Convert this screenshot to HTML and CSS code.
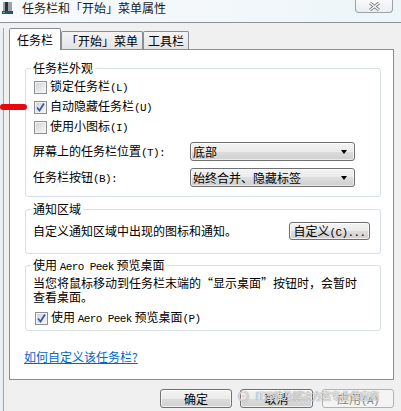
FILE: index.html
```html
<!DOCTYPE html>
<html lang="zh-CN">
<head>
<meta charset="utf-8">
<title>任务栏和「开始」菜单属性</title>
<link rel="stylesheet" href="styles.css">
</head>
<body>
<div class="window">
  <div class="titlebar">
    <div class="title">
      <svg class="appicon" width="11" height="14" viewBox="0 0 11 14">
        <rect x="1" y="1" width="9" height="9" fill="#9aa3aa"/>
        <rect x="3" y="1" width="3" height="9" fill="#30343a"/>
        <rect x="0" y="10" width="11" height="3" fill="#2b4f7a"/>
        <rect x="1" y="11" width="2" height="1" fill="#5fc35a"/>
      </svg>
      <span>任务栏和「开始」菜单属性</span>
    </div>
    <div class="close">
      <svg width="13" height="9" viewBox="0 0 13 9">
        <path d="M2 1 L11 8 M11 1 L2 8" stroke="#7a7f85" stroke-width="3" fill="none"/>
        <path d="M2 1 L11 8 M11 1 L2 8" stroke="#fbfbfb" stroke-width="1.2" fill="none"/>
      </svg>
    </div>
  </div>
  <div class="client">
    <div class="tabs">
      <div class="tab active">任务栏</div>
      <div class="tab t2">「开始」菜单</div>
      <div class="tab t3">工具栏</div>
    </div>
    <div class="panel">
      <div class="group g1">
        <div class="gtitle">任务栏外观</div>
        <div class="cb-row"><span class="cb"></span><span>锁定任务栏<span class="m">(L)</span></span></div>
        <div class="cb-row"><span class="cb checked"><svg width="11" height="11" viewBox="0 0 11 11"><path d="M2 5.5 L4.5 8.5 L9 1.5" stroke="#3c5aa0" stroke-width="1.8" fill="none"/></svg></span><span>自动隐藏任务栏<span class="m">(U)</span></span></div>
        <div class="cb-row"><span class="cb"></span><span>使用小图标<span class="m">(I)</span></span></div>
        <div class="combo-row">
          <span class="clabel">屏幕上的任务栏位置<span class="m">(T):</span></span>
          <div class="combo"><span>底部</span><span class="arrow"></span></div>
        </div>
        <div class="combo-row second">
          <span class="clabel">任务栏按钮<span class="m">(B):</span></span>
          <div class="combo"><span>始终合并、隐藏标签</span><span class="arrow"></span></div>
        </div>
      </div>
      <div class="group g2">
        <div class="gtitle">通知区域</div>
        <span>自定义通知区域中出现的图标和通知。</span>
        <div class="btn custom">自定义<span class="m">(C)...</span></div>
      </div>
      <div class="group g3">
        <div class="gtitle">使用 <span class="m">Aero Peek</span> 预览桌面</div>
        <p class="desc">当您将鼠标移动到任务栏末端的“显示桌面”按钮时，会暂时<br>查看桌面。</p>
        <div class="cb-row small"><span class="cb checked"><svg width="11" height="11" viewBox="0 0 11 11"><path d="M2 5.5 L4.5 8.5 L9 1.5" stroke="#3c5aa0" stroke-width="1.8" fill="none"/></svg></span><span>使用 <span class="m">Aero Peek</span> 预览桌面<span class="m">(P)</span></span></div>
      </div>
      <a class="help" href="#">如何自定义该任务栏?</a>
    </div>
    <div class="buttons">
      <div class="btn b-ok">确定</div>
      <div class="btn b-cancel">取消</div>
      <div class="btn b-apply disabled">应用<span class="m">(A)</span></div>
    </div>
  </div>
  <div class="redmark"></div>
  <div class="watermark"><span class="wm-logo">⊙</span><span>IT运维及解决方案专业供应商</span></div>
</div>
</body>
</html>
```

FILE: styles.css
```css
body {
  margin: 0;
  background: #f0f0f0;
  font: 12px/14px "Noto Sans CJK SC", sans-serif;
  color: #000;
}

.m {
  font-family: "Liberation Mono", monospace;
  font-size: 11px;
  letter-spacing: -0.6px;
}

.window {
  position: relative;
  width: 401px;
  height: 411px;
  overflow: hidden;
  background: linear-gradient(to right, #eaf0f4 0, #eaf0f4 3px, #f0f0f0 3px);
}

.titlebar {
  height: 22px;
  border-bottom: 1px solid #8d9296;
  display: flex;
  justify-content: space-between;
  align-items: flex-start;
  background: linear-gradient(to right, #f8fafc 0%, #f4f8fb 40%, #edf5f9 100%);
}

.title {
  display: flex;
  align-items: center;
  gap: 9px;
  padding-left: 2px;
  height: 16px;
  color: #1b1b1b;
  font-size: 12px;
}

.appicon {
  display: block;
}

.close {
  box-sizing: border-box;
  width: 38px;
  height: 13px;
  margin-right: 8px;
  border: 1px solid #9ca2a8;
  border-top: none;
  border-radius: 0 0 4px 4px;
  display: flex;
  align-items: center;
  justify-content: center;
  background: linear-gradient(#f7f9fb, #e9eef2);
}

.client {
  margin-left: 3px;
  border-left: 1px solid #a3a6a9;
  height: 388px;
}

.tabs {
  display: flex;
  align-items: flex-end;
  height: 21px;
  margin: 5px 0 0 5px;
}

.tab {
  box-sizing: border-box;
  height: 18px;
  border: 1px solid #898c95;
  border-bottom: none;
  border-radius: 2px 2px 0 0;
  background: linear-gradient(#f4f4f4, #e3e3e3);
  text-align: center;
  padding-top: 2px;
  line-height: 14px;
}

.tab.active {
  width: 52px;
  height: 22px;
  margin-bottom: -1px;
  padding-top: 4px;
  background: #fff;
  position: relative;
  z-index: 1;
}

.t2 { width: 82px; }
.t3 { width: 46px; }

.panel {
  box-sizing: border-box;
  width: 385px;
  height: 331px;
  margin-left: 5px;
  border: 1px solid #898c95;
  background: #fff;
  padding: 18px 12px 0 15px;
}

.group {
  position: relative;
  border: 1px solid #d5dfe5;
  border-radius: 3px;
}

.gtitle {
  position: absolute;
  top: -8px;
  left: 5px;
  padding: 0 2px;
  background: #fff;
  line-height: 14px;
  white-space: nowrap;
}

.g1 {
  padding: 8px 0 9px 8px;
}

.cb-row {
  display: flex;
  align-items: center;
  gap: 3px;
  height: 20px;
  white-space: nowrap;
}

.cb {
  box-sizing: border-box;
  width: 13px;
  height: 13px;
  border: 1px solid #8e8f8f;
  background: linear-gradient(135deg, #cfd3d8, #f7f7f7);
  box-shadow: inset 0 0 0 1px #f2f2f2;
  display: flex;
  align-items: center;
  justify-content: center;
}

.cb svg {
  display: block;
}

.combo-row {
  display: flex;
  align-items: center;
  margin-top: 5px;
}

.combo-row.second {
  margin-top: 7px;
}

.clabel {
  width: 157px;
  margin-left: -1px;
  white-space: nowrap;
}

.combo {
  box-sizing: border-box;
  width: 165px;
  height: 19px;
  border: 1px solid #707070;
  border-radius: 3px;
  background: linear-gradient(#f3f3f3 0%, #ebebeb 50%, #dddddd 50%, #cfcfcf 100%);
  box-shadow: inset 0 0 0 1px rgba(255, 255, 255, 0.6);
  padding: 0 7px 0 2px;
  display: flex;
  align-items: center;
  justify-content: space-between;
  white-space: nowrap;
}

.arrow {
  width: 0;
  height: 0;
  border-left: 3.5px solid transparent;
  border-right: 3.5px solid transparent;
  border-top: 4px solid #000;
}

.g2 {
  margin-top: 12px;
  padding: 12px 10px 13px 7px;
  display: flex;
  align-items: center;
  justify-content: space-between;
}

.btn {
  box-sizing: border-box;
  height: 18px;
  border: 1px solid #707070;
  border-radius: 3px;
  background: linear-gradient(#f3f3f3 0%, #ebebeb 50%, #dddddd 50%, #cfcfcf 100%);
  box-shadow: inset 0 0 0 1px rgba(255, 255, 255, 0.7);
  line-height: 16px;
  text-align: center;
  white-space: nowrap;
}

.custom {
  width: 81px;
}

.g3 {
  margin-top: 11px;
  padding: 10px 10px 5px 7px;
}

.desc {
  margin: 0;
  line-height: 14px;
  white-space: nowrap;
}

.cb-row.small {
  height: 14px;
  margin-top: 7px;
  margin-left: 2px;
}

.help {
  display: inline-block;
  margin: 19px 0 0 -1px;
  color: #0066cc;
  text-decoration: underline;
  line-height: 14px;
}

.buttons {
  display: flex;
  justify-content: flex-end;
  margin-top: 9px;
  padding-right: 7px;
}

.buttons .btn {
  height: 19px;
  line-height: 17px;
}

.b-ok { width: 72px; }
.b-cancel { width: 73px; margin-left: 8px; }
.b-apply { width: 72px; margin-left: 9px; }

.btn.disabled {
  border-color: #adb2b5;
  background: #f4f4f4;
  box-shadow: none;
  color: #838383;
}

.redmark {
  position: absolute;
  left: 0;
  top: 104px;
  width: 27px;
  height: 6px;
  border-radius: 3px;
  background: #e8080c;
}

.watermark {
  position: absolute;
  left: 237px;
  top: 389px;
  display: flex;
  align-items: center;
  gap: 6px;
  font-size: 10px;
  letter-spacing: -0.4px;
  color: rgba(255, 255, 255, 0.8);
  text-shadow: 0 0 1px #8a8a8a, 0 0 1px #8a8a8a;
  white-space: nowrap;
  pointer-events: none;
}

.wm-logo {
  font-size: 13px;
}
```
